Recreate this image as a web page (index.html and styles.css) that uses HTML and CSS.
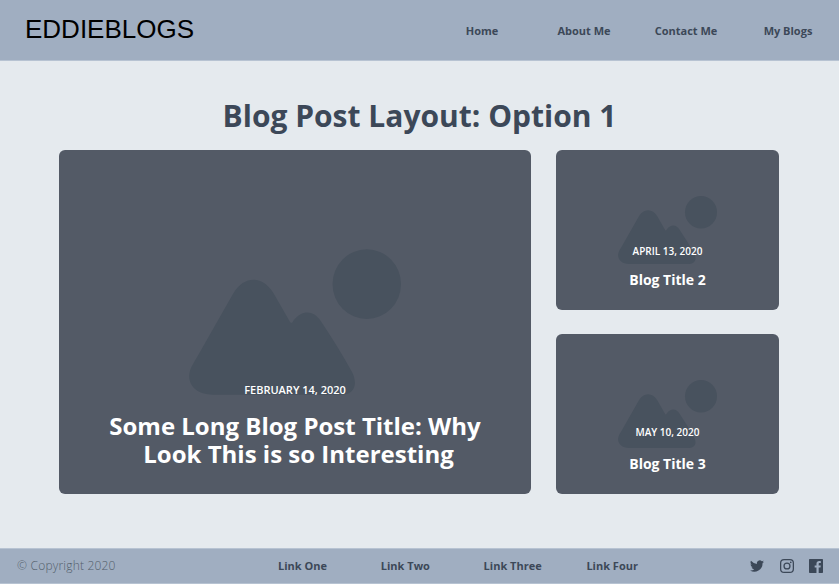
FILE: index.html
```html
<!DOCTYPE html>
<html lang="en">
<head>
<meta charset="utf-8">
<title>EddieBlogs</title>
<link rel="stylesheet" href="styles.css">
</head>
<body>
<svg width="0" height="0" class="defs" aria-hidden="true">
  <symbol id="landscape" viewBox="56 56 638 438">
    <ellipse cx="591" cy="161" rx="103" ry="105"/>
    <path d="M190 188C222 134 278 134 310 188L357 270Q364 286 371 270C396 238 430 238 452 271Q505 350 547 426C566 466 551 494 514 494H129C68 494 43 452 64 409Q70 398 83 376Z"/>
  </symbol>
</svg>
<header class="header">
  <div class="logo">EDDIEBLOGS</div>
  <nav class="nav"><a>Home</a><a>About Me</a><a>Contact Me</a><a>My Blogs</a></nav>
</header>
<main class="main">
  <h1 class="heading">Blog Post Layout: Option 1</h1>
  <div class="posts">
    <article class="card featured">
      <svg class="art"><use href="#landscape"/></svg>
      <div class="text"><p class="date">FEBRUARY 14, 2020</p><h2 class="title">Some Long Blog Post Title: Why<br><span class="second-line">Look This is so Interesting</span></h2></div>
    </article>
    <article class="card">
      <svg class="art"><use href="#landscape"/></svg>
      <div class="text"><p class="date">APRIL 13, 2020</p><h2 class="title">Blog Title 2</h2></div>
    </article>
    <article class="card last">
      <svg class="art"><use href="#landscape"/></svg>
      <div class="text"><p class="date">MAY 10, 2020</p><h2 class="title">Blog Title 3</h2></div>
    </article>
  </div>
</main>
<footer class="footer">
  <div class="copyright">© Copyright 2020</div>
  <nav class="links"><a>Link One</a><a>Link Two</a><a>Link Three</a><a>Link Four</a></nav>
  <div class="social">
    <svg viewBox="0 0 24 24"><path d="M24 4.6a10 10 0 0 1-2.8.8 5 5 0 0 0 2.2-2.7 10 10 0 0 1-3.1 1.2 4.9 4.9 0 0 0-8.4 4.5A14 14 0 0 1 1.7 3.2a4.9 4.9 0 0 0 1.5 6.5 5 5 0 0 1-2.2-.6 4.9 4.9 0 0 0 3.9 4.9 5 5 0 0 1-2.2.1 4.9 4.9 0 0 0 4.6 3.4A9.9 9.9 0 0 1 0 19.5a14 14 0 0 0 21.5-12.4A10 10 0 0 0 24 4.6z"/></svg>
    <svg viewBox="0 0 24 24"><path fill-rule="evenodd" d="M7 0h10a7 7 0 0 1 7 7v10a7 7 0 0 1-7 7H7a7 7 0 0 1-7-7V7a7 7 0 0 1 7-7zm0 2.2A4.8 4.8 0 0 0 2.2 7v10A4.8 4.8 0 0 0 7 21.800h10a4.800 4.800 0 0 0 4.800-4.800V7A4.800 4.800 0 0 0 17 2.200zM12 5.800a6.200 6.200 0 1 1 0 12.400 6.200 6.200 0 0 1 0-12.400zm0 2.200a4 4 0 1 0 0 8 4 4 0 0 0 0-8z"/><circle cx="18.400" cy="5.600" r="1.500"/></svg>
    <svg viewBox="0 0 24 24"><path d="M22.700 0H1.300A1.300 1.300 0 0 0 0 1.300v21.400A1.300 1.300 0 0 0 1.300 24h11.500v-9.300H9.700v-3.600h3.100V8.400c0-3.100 1.900-4.800 4.700-4.800 1.300 0 2.500.1 2.800.2V7h-1.900c-1.500 0-1.800.7-1.800 1.800v2.300h3.600l-.5 3.600h-3.100V24h6.100a1.300 1.300 0 0 0 1.300-1.300V1.300A1.300 1.300 0 0 0 22.700 0z"/></svg>
  </div>
</footer>
</body>
</html>
```
FILE: styles.css
```css
* { box-sizing: border-box; margin: 0; }
body {
  min-height: 584px;
  display: grid;
  grid-template-rows: 61px 1fr 36px;
  background: #e5eaee;
  color: #3c4858;
  font-family: "Open Sans", sans-serif;
}
.defs { position: absolute; }
.header {
  display: flex;
  justify-content: space-between;
  background: #a0aec1;
  border-bottom: 1px solid #b7c3d2;
}
.logo {
  padding: 13px 0 0 25px;
  color: #000;
  font: 26px/32px "Liberation Sans", Arial, sans-serif;
}
.nav {
  display: grid;
  grid-template-columns: repeat(4, 102px);
  text-align: center;
  font-size: 11px;
  font-weight: 700;
  line-height: 61px;
}
.main { padding: 35px 60px 0 59px; }
.heading {
  height: 54px;
  padding-left: 1px;
  text-align: center;
  font-size: 30px;
  font-weight: 700;
  line-height: 40px;
}
.posts {
  display: grid;
  grid-template: 160px 160px / 472px 223px;
  gap: 24px 25px;
}
.card {
  display: grid;
  border-radius: 6px;
  background: #535a66;
  color: #fff;
  text-align: center;
}
.featured { grid-row: span 2; }
.art, .text { grid-area: 1 / 1; }
.art {
  place-self: center;
  width: 99px;
  height: 68px;
  fill: #48525e;
}
.featured .art { width: 212px; height: 146px; }
.text { align-self: end; z-index: 1; padding-bottom: 20px; }
.date { font-size: 10px; font-weight: 600; line-height: 14px; margin-bottom: 12px; }
.last .date { margin-bottom: 15px; }
.title { font-size: 14px; font-weight: 700; line-height: 20px; }
.featured .text { padding-bottom: 26px; }
.featured .date { font-size: 11px; margin-bottom: 15px; }
.featured .title { font-size: 24px; line-height: 28px; }
.second-line { display: inline-block; padding-left: 7px; }
.footer {
  display: grid;
  grid-template-columns: 261px 411px 1fr;
  background: #a0aec1;
  border-top: 1px solid #b7c3d2;
  border-bottom: 1px solid #b7c3d2;
  padding-left: 17px;
  line-height: 34px;
}
.copyright { font-size: 12px; font-weight: 300; letter-spacing: .2px; color: #535e6b; }
.links {
  display: grid;
  grid-template-columns: repeat(4, 102.8px);
  font-size: 11px;
  font-weight: 700;
}
.social {
  display: flex;
  align-items: center;
  justify-content: flex-end;
  gap: 15.5px;
  padding-right: 16px;
}
.social svg { width: 14px; height: 14px; fill: #3c4858; }
```
